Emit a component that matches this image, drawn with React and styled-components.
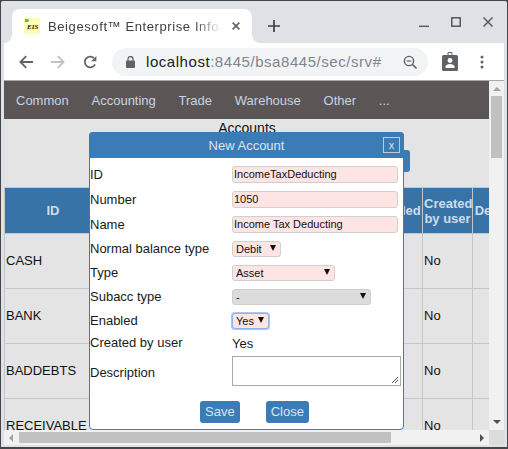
import React from "react";
import styled, { createGlobalStyle } from "styled-components";

const Global = createGlobalStyle`
  html, body { margin: 0; padding: 0; width: 508px; height: 449px; overflow: hidden; background: #45464a; }
  * { box-sizing: border-box; }
`;
const Win = styled.div`
  width: 508px; height: 449px; padding: 1px 1px 2px 1px; background: #45464a;
  font-family: "Liberation Sans", Arial, sans-serif; color: #111;
`;
const Frame = styled.div`
  height: 100%; background: #dee1e6; border-radius: 2px 2px 0 0; display: flex; flex-direction: column;
`;
const TabStrip = styled.div`
  height: 42px; flex: none; display: flex; align-items: flex-end; padding-left: 11px;
`;
const Tab = styled.div`
  width: 240px; height: 34px; background: #fff; border-radius: 8px 8px 0 0; display: flex; align-items: center;
  padding: 0 12px 0 12px; font: 13px "Liberation Sans", sans-serif; letter-spacing: .6px; color: #3c4043; position: relative;
  &::before, &::after { content: ""; position: absolute; bottom: 0; width: 8px; height: 8px; }
  &::before { left: -8px; background: radial-gradient(circle at 0 0, transparent 7.6px, #fff 8.2px); }
  &::after { right: -8px; background: radial-gradient(circle at 100% 0, transparent 7.6px, #fff 8.2px); }
`;
const Favicon = styled.div`
  width: 16px; height: 16px; flex: none; background: #ffffb4; color: #111; font: italic bold 7px "Liberation Serif", serif;
  display: flex; flex-direction: column; align-items: flex-start; margin-right: 8px; letter-spacing: 0; padding: 2px 0 0 1px; line-height: 1;
`;
const FavTiny = styled.span`font-size: 3px; line-height: 3px; height: 4px;`;
const FavMain = styled.span`margin-left: 2px;`;
const TabTitle = styled.span`
  width: 174px; margin-right: 10px; overflow: hidden; white-space: nowrap;
  mask-image: linear-gradient(90deg, #000 84%, transparent 100%);
`;
const NewTab = styled.div`margin-left: 16px; margin-bottom: 11px; display: flex;`;
const WinControls = styled.div`
  margin-left: auto; display: flex; align-items: center; gap: 22px; align-self: flex-start; padding: 16px 14px 0 0;
`;
const Inset = styled.div`padding: 0 3px; display: flex; flex-direction: column;`;
const Toolbar = styled.div`
  height: 38px; flex: none; background: #fff; display: flex; align-items: center; padding: 0 0 0 15px; border-bottom: 1px solid #a9a7a7;
`;
const NavIcons = styled.div`display: flex; align-items: center; gap: 18px;`;
const Omnibox = styled.div`
  width: 316px; height: 28px; margin-left: 15px; background: #f1f3f4; border-radius: 14px; display: flex; align-items: center; flex: none;
  padding: 0 11px 0 14px; font: 15px "Liberation Sans", sans-serif; letter-spacing: .55px; color: #80868b;
`;
const Host = styled.span`color: #202124;`;
const Url = styled.span`margin-left: 11px; flex: 1; white-space: nowrap;`;
const ToolEnd = styled.div`display: flex; align-items: center; margin-left: 14px; gap: 22px;`;
const Viewport = styled.div`
  display: grid; grid-template-columns: 485px 15px; grid-template-rows: 349px 15px; background: #e4e4e4;
`;
const Page = styled.div`overflow: hidden; background: #e4e4e4; position: relative;`;
const Menu = styled.nav`
  height: 38px; background: #5b5555; display: flex; align-items: center; padding: 1px 0 0 12px; gap: 22.75px;
  font-size: 13px; color: #c6d4e3;
`;
const MenuItem = styled.span``;
const Heading = styled.div`text-align: center; font-size: 14px; height: 18px; padding-top: 1px; line-height: 17px; padding-left: 1px;`;
const ActionRow = styled.div`height: 50px; position: relative;`;
const Grid = styled.table`
  border-collapse: collapse; table-layout: fixed; width: 544px; font-size: 13px;
  td, th { border: 1px solid #c6c6c6; padding: 0 1px; overflow: hidden; }
`;
const Head = styled.th`
  background: #3873a8; color: #cfdcea; height: 46px; font-size: 13px; font-weight: bold; line-height: 15px; text-align: center;
`;
const Cell = styled.td`height: 55px; white-space: nowrap; && { padding-bottom: 2px; }`;
const AddButton = styled.div`
  position: absolute; left: 386px; top: 13px; width: 20px; height: 22px; background: #3c7cb6; border-radius: 3px;
`;
const VBar = styled.div`background: #f1f1f1; display: flex; flex-direction: column; align-items: center; padding: 6px 0;`;
const HBar = styled.div`background: #f1f1f1; display: flex; align-items: center; padding: 0 5px;`;
const Corner = styled.div`background: #dcdcdc;`;
const VThumb = styled.div`width: 11px; height: 62px; margin-top: 5px; background: #c1c1c1;`;
const HThumb = styled.div`width: 372px; height: 11px; margin-left: 6px; background: #c1c1c1;`;
const Spacer = styled.div`flex: 1;`;
const ArrowUp = styled.div`width: 0; height: 0; border: 4px solid transparent; border-top: 0; border-bottom: 4px solid #a3a3a3;`;
const ArrowDown = styled.div`width: 0; height: 0; border: 4px solid transparent; border-bottom: 0; border-top: 4px solid #505050;`;
const ArrowLeft = styled.div`width: 0; height: 0; border: 4px solid transparent; border-left: 0; border-right: 4px solid #a3a3a3;`;
const ArrowRight = styled.div`width: 0; height: 0; border: 4px solid transparent; border-right: 0; border-left: 4px solid #505050;`;
const Modal = styled.div`
  position: absolute; left: 85px; top: 51px; width: 315px; height: 298px; background: #fff;
  border: 1px solid #3c7cb6; border-radius: 4px; font-size: 13px; display: flex; flex-direction: column;
`;
const ModalHead = styled.div`
  background: #3c7cb6; color: #d7e5f2; display: flex; align-items: center; justify-content: center; position: relative;
  font-size: 13px; margin: -1px -1px 0 -1px; border-radius: 4px 4px 0 0; height: 26px; flex: none;
`;
const CloseX = styled.span`
  position: absolute; right: 4px; top: 5px; width: 17px; height: 16px; border: 1px solid #b5cde3; color: #d7e5f2;
  font-size: 11px; line-height: 14px; text-align: center;
`;
const Form = styled.div`
  display: grid; grid-template-columns: 142px 1fr; padding: 4px 5px 0 0; align-items: center; color: #1a1a1a;
`;
const Row = styled.div`display: contents;`;
const Label = styled.div`height: ${p => p.$h}px; line-height: ${p => p.$h}px; white-space: nowrap;`;
const TextBox = styled.div`
  height: 17px; width: 166px; background: #ffe4e4; border: 1px solid #cfcfcf; border-radius: 3px; font-size: 11px; line-height: 15px; padding-left: 1px; color: #111;
`;
const SelectBox = styled.div`
  height: 16px; width: ${p => p.$w}px; background: ${p => p.$grey ? "#dcdcdc" : "#ffe4e4"}; border: 1px solid ${p => p.$focus ? "#8fb4f0" : "#cfcfcf"};
  ${p => p.$focus ? "box-shadow: 0 0 0 1px #a9c6f5;" : ""}
  border-radius: 3px; font-size: 11px; line-height: 14px; padding: 0 4px 0 3px; color: #111; display: flex; align-items: center; justify-content: space-between;
`;
const Caret = styled.span`width: 0; height: 0; border: 3.5px solid transparent; border-bottom: 0; border-top: 6px solid #111; margin-top: -3px;`;
const Plain = styled.div`font-size: 13px;`;
const Area = styled.div`
  width: 169px; height: 30px; border: 1px solid #a9a9a9; position: relative; background: #fff; margin-bottom: 4px;
`;
const Grip = styled.svg`position: absolute; right: 1px; bottom: 1px;`;
const Buttons = styled.div`display: flex; gap: 26px; padding: 8px 0 0 110px;`;
const Btn = styled.div`
  background: #3c7cb6; color: #d7e5f2; height: 22px; line-height: 22px; border-radius: 3px; padding: 0 5px; font-size: 13px;
`;

const rows = ["CASH", "BANK", "BADDEBTS", "RECEIVABLE"];
const Ic = ({ children, w = 16, h = 16 }) => (
  <svg width={w} height={h} viewBox={`0 0 ${w} ${h}`} fill="none" style={{ flex: "none", display: "block" }}>{children}</svg>
);

export default function App() {
  return (
    <Win>
      <Global />
      <Frame>
        <TabStrip>
          <Tab>
            <Favicon><FavTiny>BS</FavTiny><FavMain>EIS</FavMain></Favicon>
            <TabTitle>Beigesoft™ Enterprise Info</TabTitle>
            <Ic w={8} h={8}><path d="M.6.6l6.8 6.8M7.4.6L.6 7.4" stroke="#5f6368" strokeWidth="1.6" /></Ic>
          </Tab>
          <NewTab><Ic w={12} h={12}><path d="M6 0v12M0 6h12" stroke="#3c4043" strokeWidth="1.7" /></Ic></NewTab>
          <WinControls>
            <Ic w={10} h={10}><path d="M0 9.3h10" stroke="#55585c" strokeWidth="1.4" /></Ic>
            <Ic w={10} h={10}><rect x=".8" y=".8" width="8.4" height="8.4" stroke="#55585c" strokeWidth="1.5" /></Ic>
            <Ic w={10} h={10}><path d="M.5.5l9 9M9.5.5l-9 9" stroke="#55585c" strokeWidth="1.5" /></Ic>
          </WinControls>
        </TabStrip>
        <Inset>
          <Toolbar>
            <NavIcons>
              <Ic w={14} h={14}><path d="M14 7H1.6M7.2 1.2L1.4 7l5.8 5.8" stroke="#5f6368" strokeWidth="1.8" /></Ic>
              <Ic w={14} h={14}><path d="M0 7h12.4M6.8 1.2L12.6 7l-5.8 5.8" stroke="#bdc1c6" strokeWidth="1.8" /></Ic>
              <Ic w={14} h={14}><path d="M12 9.4A5.4 5.4 0 1 1 10.9 3" stroke="#5f6368" strokeWidth="1.8" /><path d="M13.4 1v5.2H8.2z" fill="#5f6368" /></Ic>
            </NavIcons>
            <Omnibox>
              <Ic w={9} h={12}><rect y="4.5" width="9" height="7.5" rx="1" fill="#5f6368" /><path d="M2 5V3a2.5 2.5 0 0 1 5 0v2" stroke="#5f6368" strokeWidth="1.3" /></Ic>
              <Url><Host>localhost</Host>:8445/bsa8445/sec/srv#</Url>
              <Ic w={14} h={14}><circle cx="6" cy="6" r="4.6" stroke="#5f6368" strokeWidth="1.4" /><path d="M9.5 9.5L13.5 13.5" stroke="#5f6368" strokeWidth="1.6" /><path d="M3.7 6h4.6" stroke="#5f6368" strokeWidth="1.2" /></Ic>
            </Omnibox>
            <ToolEnd>
              <Ic w={16} h={19}><path d="M1.5 3h13A1.5 1.5 0 0 1 16 4.5v13a1.5 1.5 0 0 1-1.5 1.5h-13A1.5 1.5 0 0 1 0 17.5v-13A1.5 1.5 0 0 1 1.5 3z" fill="#5f6368" /><path d="M6 3V.5h4V3" stroke="#5f6368" /><circle cx="8" cy="8.5" r="2.4" fill="#fff" /><path d="M3.5 16v-1.5c0-1.8 2.4-2.6 4.5-2.6s4.5.8 4.5 2.6V16z" fill="#fff" /></Ic>
              <Ic w={4} h={14}><circle cx="2" cy="2" r="1.5" fill="#5f6368" /><circle cx="2" cy="7" r="1.5" fill="#5f6368" /><circle cx="2" cy="12" r="1.5" fill="#5f6368" /></Ic>
            </ToolEnd>
          </Toolbar>
          <Viewport>
            <Page>
              <Menu>
                {["Common", "Accounting", "Trade", "Warehouse", "Other", "..."].map(m => <MenuItem key={m}>{m}</MenuItem>)}
              </Menu>
              <Heading>Accounts</Heading>
              <ActionRow><AddButton /></ActionRow>
              <Grid>
                <colgroup>
                  <col style={{ width: 97 }} /><col style={{ width: 267 }} /><col style={{ width: 54 }} /><col style={{ width: 50 }} /><col style={{ width: 76 }} />
                </colgroup>
                <thead><tr><Head>ID</Head><Head /><Head>Enabled</Head><Head>Created by user</Head><Head>Description</Head></tr></thead>
                <tbody>
                  {rows.map(id => (
                    <tr key={id}><Cell>{id}</Cell><Cell /><Cell /><Cell>No</Cell><Cell /></tr>
                  ))}
                </tbody>
              </Grid>
              <Modal>
                <ModalHead>New Account<CloseX>x</CloseX></ModalHead>
                <Form>
                  <Row><Label $h={25}>ID</Label><TextBox>IncomeTaxDeducting</TextBox></Row>
                  <Row><Label $h={25}>Number</Label><TextBox>1050</TextBox></Row>
                  <Row><Label $h={25}>Name</Label><TextBox>Income Tax Deducting</TextBox></Row>
                  <Row><Label $h={24}>Normal balance type</Label><SelectBox $w={49}>Debit<Caret /></SelectBox></Row>
                  <Row><Label $h={24}>Type</Label><SelectBox $w={103}>Asset<Caret /></SelectBox></Row>
                  <Row><Label $h={24}>Subacc type</Label><SelectBox $w={139} $grey>-<Caret /></SelectBox></Row>
                  <Row><Label $h={24}>Enabled</Label><SelectBox $w={37} $focus>Yes<Caret /></SelectBox></Row>
                  <Row><Label $h={20}>Created by user</Label><Plain>Yes</Plain></Row>
                  <Row><Label $h={40}>Description</Label><Area><Grip width="8" height="8"><path d="M1 7l6-6M4 7l3-3" stroke="#555" /></Grip></Area></Row>
                </Form>
                <Buttons><Btn>Save</Btn><Btn>Close</Btn></Buttons>
              </Modal>
            </Page>
            <VBar><ArrowUp /><VThumb /><Spacer /><ArrowDown /></VBar>
            <HBar><ArrowLeft /><HThumb /><Spacer /><ArrowRight /></HBar>
            <Corner />
          </Viewport>
        </Inset>
      </Frame>
    </Win>
  );
}
